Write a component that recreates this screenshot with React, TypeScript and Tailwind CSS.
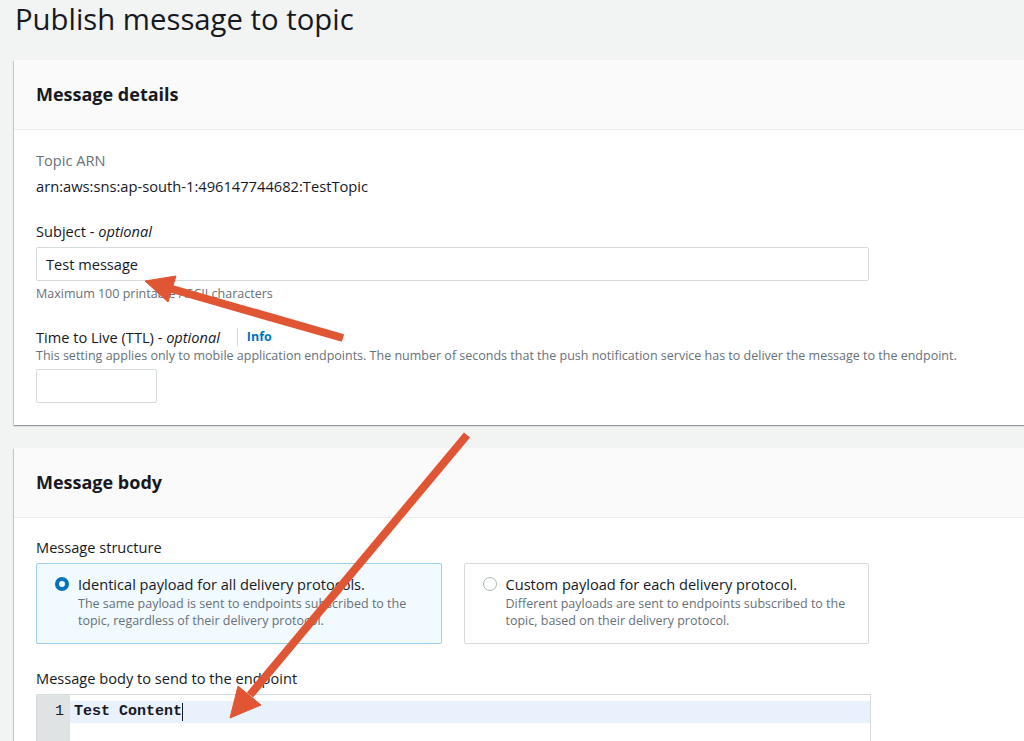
import React from 'react';

const label = "text-[14.6px] leading-[22px] text-[#16191f]";
const hint = "text-[12.5px] leading-[16px] text-[#687078]";

function Card({ title, children, bodyClass }: { title: string; children: React.ReactNode; bodyClass: string }) {
    return (
        <div className="bg-white -mr-4 shadow-[0_1px_1px_0_rgba(0,28,36,0.3),-1px_1px_1px_0_rgba(0,28,36,0.15)]">
            <div className="h-[70px] flex items-center px-[22px] bg-[#fafafa] border-b border-[#eaeded]">
                <h2 className="text-[18px] font-bold text-[#16191f]">{title}</h2>
            </div>
            <div className={bodyClass}>{children}</div>
        </div>
    );
}

function Tile({ selected, title, desc }: { selected?: boolean; title: string; desc: React.ReactNode }) {
    return (
        <div
            className={
                "h-[81px] rounded-[2px] border pl-[18px] pr-4 pt-[9px] flex gap-[9px] " +
                (selected ? "bg-[#f1faff] border-[#9fcde8]" : "bg-white border-[#d5dbdb]")
            }
        >
            <div className="h-[22px] flex items-center">
                {selected ? (
                    <span className="block w-[14px] h-[14px] rounded-full border-[4px] border-[#0073bb] bg-white" />
                ) : (
                    <span className="block w-[14px] h-[14px] rounded-full border border-[#aab7b8] bg-white" />
                )}
            </div>
            <div>
                <div className={label}>{title}</div>
                <div className="text-[12.5px] leading-[17px] text-[#687078]">{desc}</div>
            </div>
        </div>
    );
}

export default function App() {
    return (
        <div className="relative w-[1024px] h-[741px] overflow-hidden bg-[#f2f3f3] font-['Open_Sans',sans-serif]">
            <h1 className="pl-[15px] pt-[1px] text-[29.3px] leading-[36px] text-[#16191f]">Publish message to topic</h1>

            <div className="mt-[23px] ml-[14px] flex flex-col gap-[23px]">
                <Card title="Message details" bodyClass="px-[22px] pt-[19px] pb-[22px]">
                    <div className="text-[14.6px] leading-[22px] text-[#687078]">Topic ARN</div>
                    <div className="text-[14.7px] leading-[22px] text-[#16191f] mt-[4px]">arn:aws:sns:ap-south-1:496147744682:TestTopic</div>

                    <div className={label + " mt-[23px]"}>
                        Subject - <i>optional</i>
                    </div>
                    <div className="mt-[5px] w-[833px] h-[34px] border border-[#d5dbdb] rounded-[2px] pl-[9px] flex items-center">
                        <span className={label}>Test message</span>
                    </div>
                    <div className={hint + " mt-[5px]"}>Maximum 100 printable ASCII characters</div>

                    <div className="mt-[24px] flex items-center">
                        <span className={label}>
                            Time to Live (TTL) - <i>optional</i>
                        </span>
                        <span className="ml-[17px] mr-[9px] h-[18px] border-l border-[#d5dbdb]" />
                        <span className="text-[12.5px] font-bold text-[#0073bb]">Info</span>
                    </div>
                    <div className={hint}>
                        This setting applies only to mobile application endpoints. The number of seconds that the push
                        notification service has to deliver the message to the endpoint.
                    </div>
                    <div className="mt-[5px] w-[121px] h-[34px] border border-[#d5dbdb] rounded-[2px]" />
                </Card>

                <Card title="Message body" bodyClass="px-[22px] pt-[18px] pb-10">
                    <div className={label}>Message structure</div>
                    <div className="mt-[5px] w-[833px] grid grid-cols-2 gap-[22px]">
                        <Tile
                            selected
                            title="Identical payload for all delivery protocols."
                            desc={<>The same payload is sent to endpoints subscribed to the<br />topic, regardless of their delivery protocol.</>}
                        />
                        <Tile
                            title="Custom payload for each delivery protocol."
                            desc={<>Different payloads are sent to endpoints subscribed to the<br />topic, based on their delivery protocol.</>}
                        />
                    </div>

                    <div className={label + " mt-[23px]"}>Message body to send to the endpoint</div>
                    <div className="mt-[5px] w-[835px] h-[80px] border border-[#d5dbdb] flex">
                        <div className="w-[33px] bg-[#dfe3e3] pt-[6px]">
                            <div className="h-[22px] leading-[22px] text-right pr-[6px] font-['Liberation_Mono',monospace] text-[15px] text-[#16191f]">
                                1
                            </div>
                        </div>
                        <div className="flex-1 pt-[6px]">
                            <div className="h-[22px] bg-[#e9f1fd] pl-[4px] flex items-center font-['Liberation_Mono',monospace] font-bold text-[15px] text-[#16191f]">
                                Test Content
                                <span className="inline-block w-px h-[18px] bg-[#16191f]" />
                            </div>
                        </div>
                    </div>
                </Card>
            </div>

            {/* annotation arrows */}
            <svg className="absolute inset-0 pointer-events-none" width="1024" height="741">
                <g fill="#e05533" stroke="#e05533">
                    <line x1="343" y1="338" x2="172" y2="289" strokeWidth="8" />
                    <polygon points="145,281 176,276 168,302" strokeWidth="1" />
                    <line x1="467" y1="435" x2="250" y2="695" strokeWidth="8" />
                    <polygon points="230,718 238,686 261,705" strokeWidth="1" />
                </g>
            </svg>
        </div>
    );
}
